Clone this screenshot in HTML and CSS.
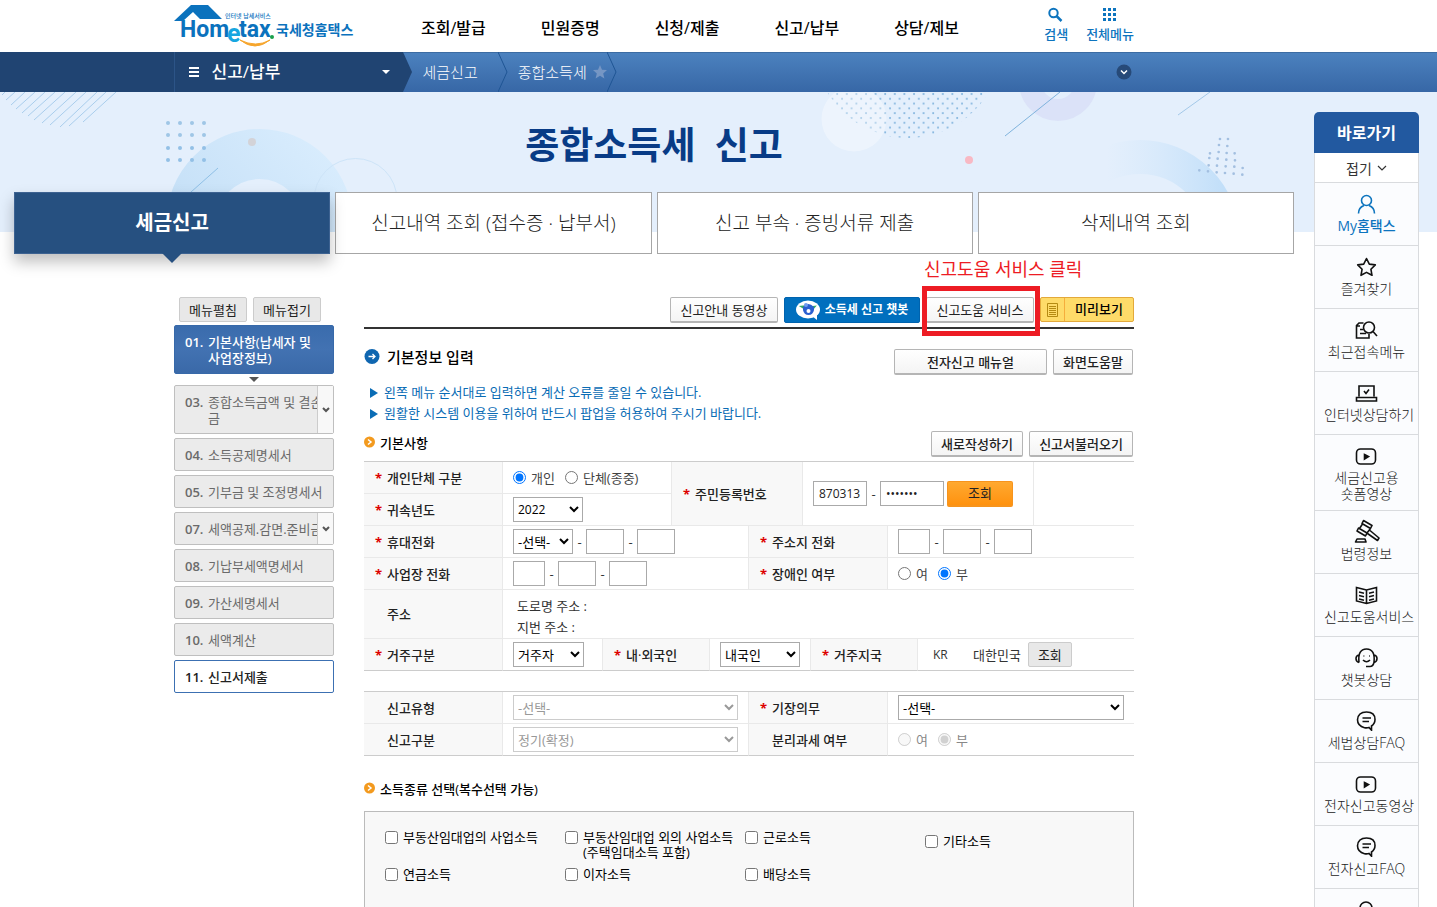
FILE: index.html
```
<!DOCTYPE html>
<html lang="ko">
<head>
<meta charset="utf-8">
<meta name="viewport" content="width=device-width, initial-scale=1">
<title>국세청홈택스 - 종합소득세 신고</title>
<link rel="stylesheet" href="styles.css">
</head>
<body>
<header class="top">
  <div class="top-inner">
    <a class="logo" href="#" aria-label="Hometax 국세청홈택스">
      <svg width="180" height="48" viewBox="0 0 180 48">
        <path d="M0 17 17 1H34L48 15H26L19 8 9 17Z" fill="#0b72bd"/>
        <text class="lg-main" x="6" y="33">Hom</text>
        <text class="lg-e" x="53" y="38">e</text>
        <text class="lg-main" x="65" y="33">tax</text>
        <circle cx="98" cy="33" r="2" fill="#1ba04b"/>
        <path d="M66 36Q81 48 96 36Q82 44 66 36Z" fill="#f6a52c" stroke="#f6a52c"/>
        <text class="lg-tiny" x="51" y="14">인터넷 납세서비스</text>
        <text class="lg-ko" x="102" y="31">국세청홈택스</text>
      </svg>
    </a>
    <nav class="gnb">
      <a href="#">조회/발급</a>
      <a href="#">민원증명</a>
      <a href="#">신청/제출</a>
      <a href="#">신고/납부</a>
      <a href="#">상담/제보</a>
    </nav>
    <div class="util">
      <a href="#"><svg width="16" height="16" viewBox="0 0 16 16" fill="none" stroke="#0d74be"><circle cx="5.500" cy="6" r="4.200" stroke-width="2"/><path d="M8.500 9 13.500 14" stroke-width="2.500"/></svg><span>검색</span></a>
      <a href="#"><svg width="16" height="16" viewBox="0 0 16 16" fill="#0d74be"><path d="M1 1h3v3H1zM6 1h3v3H6zM11 1h3v3h-3zM1 6h3v3H1zM6 6h3v3H6zM11 6h3v3h-3zM1 11h3v3H1zM6 11h3v3H6zM11 11h3v3h-3z"/></svg><span>전체메뉴</span></a>
    </div>
  </div>
</header>

<div class="crumb">
  <div class="crumb-left"></div>
  <div class="crumb-inner">
    <button class="crumb-menu" type="button">
      <svg width="10" height="10" viewBox="0 0 10 10" fill="#fff"><path d="M0 0h10v2H0zM0 4h10v2H0zM0 8h10v2H0z"/></svg>
      <span>신고/납부</span>
      <svg width="8" height="4" viewBox="0 0 8 4" fill="#fff"><path d="M0 0h8L4 4z"/></svg>
    </button>
    <svg class="crumb-tip" width="10" height="40" viewBox="0 0 10 40"><path d="M0 0 9 20 0 40Z" fill="#204472"/></svg>
    <a class="crumb-item" href="#">세금신고</a>
    <svg width="10" height="40" viewBox="0 0 10 40" fill="none"><path d="M0 0 9 20 0 40" stroke="#1f5594"/></svg>
    <a class="crumb-item" href="#">종합소득세</a>
    <svg class="crumb-star" width="14" height="14" viewBox="0 0 14 14"><path d="m7 0 2 4.700 5 .4-3.800 3.300 1.200 5L7 10.700 2.600 13.400l1.200-5L0 5.100l5-.4z" fill="#7596c4"/></svg>
    <svg width="10" height="40" viewBox="0 0 10 40" fill="none"><path d="M0 0 9 20 0 40" stroke="#1f5594"/></svg>
    <button class="crumb-more" type="button" aria-label="펼치기"><svg width="16" height="16" viewBox="0 0 16 16"><circle cx="8" cy="8" r="7.500" fill="#274a78"/><path d="m5 6.500 3 3 3-3" fill="none" stroke="#fff" stroke-width="1.500"/></svg></button>
  </div>
  <div class="crumb-right"></div>
</div>

<section class="hero">
  <svg class="hero-art" viewBox="0 0 1437 140" preserveAspectRatio="xMidYMin slice" aria-hidden="true">
    <defs>
      <linearGradient id="ringL" x1="0" y1="1" x2="1" y2="0"><stop offset="0" stop-color="#bfdcf5"/><stop offset="1" stop-color="#d8ecfd"/></linearGradient>
      <linearGradient id="ringR"><stop offset=".3" stop-color="#cfe6fb" stop-opacity="0"/><stop offset="1" stop-color="#c2dff9"/></linearGradient>
      <pattern id="dots" width="9.600" height="9.600" patternUnits="userSpaceOnUse"><circle cx="2" cy="2" r="1" fill="#7db1dc"/><circle cx="6.800" cy="6.800" r="1" fill="#7db1dc"/></pattern>
    </defs>
    <path d="M5 0 2 3M15 0 6 8M25 0 11 13M35 0 16 17M45 0 22 21M55 0 28 24M65 0 34 28M76 0 42 31M86 0 50 33M97 0 60 35M106 0 69 34M116 0 83 30" stroke="#a9cdec" fill="none"/>
    <g fill="#9fc6e6"><circle cx="168" cy="31" r="2"/><circle cx="180" cy="31" r="2"/><circle cx="192" cy="31" r="2"/><circle cx="204" cy="31" r="2"/><circle cx="168" cy="43" r="2"/><circle cx="180" cy="43" r="2"/><circle cx="192" cy="43" r="2"/><circle cx="204" cy="43" r="2"/></g>
    <circle cx="259.500" cy="130" r="68" fill="none" stroke="url(#ringL)" stroke-width="50"/>
    <g fill="#93c0e6"><circle cx="168" cy="56" r="2"/><circle cx="180" cy="56" r="2"/><circle cx="192" cy="56" r="2"/><circle cx="204" cy="56" r="2"/><circle cx="168" cy="68" r="2"/><circle cx="180" cy="68" r="2"/><circle cx="192" cy="68" r="2"/><circle cx="204" cy="68" r="2"/></g>
    <circle cx="252" cy="50" r="4" fill="#d3d3d8"/>
    <path d="M191 100 218 76" stroke="#8fc0e6"/>
    <circle cx="355.500" cy="108" r="41.500" fill="none" stroke="#cde4f8"/>
    <circle cx="908" cy="-48" r="94" fill="url(#dots)"/>
    <circle cx="854" cy="27" r="32.500" fill="#fff" opacity=".35"/>
    <circle cx="1058" cy="-10" r="28" fill="none" stroke="#dbe2f8" stroke-width="22"/>
    <path d="M1060 0 1005 44" stroke="#7fb3dc"/>
    <path d="M1210 0 1178 23" stroke="#a3c8e8"/>
    <circle cx="969" cy="68" r="4" fill="#f8b9c4"/>
    <circle cx="1140" cy="148" r="83" fill="none" stroke="url(#ringR)" stroke-width="34"/>
    <path transform="translate(900 -2) scale(.3333)" d="M960 147h.1M984 147h.1M957 165h.1M982 168h.1M930 190h.1M956 186h.1M980 189h.1M1004 190h.1M928 204h.1M953 206h.1M979 209h.1M1005 211h.1M926 226h.1M951 227h.1M977 229h.1M1003 230h.1M1028 234h.1M898 241h.1M924 244h.1M950 247h.1M975 249h.1M1001 251h.1M1027 254h.1" stroke="#a3bfe0" stroke-width="8" stroke-linecap="round"/>
  </svg>
  <h1 class="hero-title">종합소득세 &nbsp;신고</h1>
  <nav class="tabs">
    <a class="tab tab-on" href="#">세금신고</a>
    <a class="tab" href="#">신고내역 조회 (접수증 · 납부서)</a>
    <a class="tab" href="#">신고 부속 · 증빙서류 제출</a>
    <a class="tab" href="#">삭제내역 조회</a>
  </nav>
</section>

<div class="page">
  <aside class="side">
    <div class="side-ctl">
      <button class="btn btn-gray" type="button">메뉴펼침</button>
      <button class="btn btn-gray" type="button">메뉴접기</button>
    </div>
    <ul class="steps">
      <li class="step step-now"><a href="#"><b>01.</b><span>기본사항(납세자 및 사업장정보)</span></a></li>
      <li class="step-arrow"></li>
      <li class="step"><a href="#"><b>03.</b><span class="cut">종합소득금액 및 결손금</span></a><button class="step-more" type="button" aria-label="하위메뉴"><svg width="8" height="6" viewBox="0 0 8 6"><path d="m1 1 3 3 3-3" fill="none" stroke="#555" stroke-width="2"/></svg></button></li>
      <li class="step"><a href="#"><b>04.</b><span>소득공제명세서</span></a></li>
      <li class="step"><a href="#"><b>05.</b><span>기부금 및 조정명세서</span></a></li>
      <li class="step"><a href="#"><b>07.</b><span>세액공제.감면.준비금</span></a><button class="step-more" type="button" aria-label="하위메뉴"><svg width="8" height="6" viewBox="0 0 8 6"><path d="m1 1 3 3 3-3" fill="none" stroke="#555" stroke-width="2"/></svg></button></li>
      <li class="step"><a href="#"><b>08.</b><span>기납부세액명세서</span></a></li>
      <li class="step"><a href="#"><b>09.</b><span>가산세명세서</span></a></li>
      <li class="step"><a href="#"><b>10.</b><span>세액계산</span></a></li>
      <li class="step step-last"><a href="#"><b>11.</b><span>신고서제출</span></a></li>
    </ul>
  </aside>

  <main class="main">
    <div class="tools">
      <button class="btn w-108" type="button">신고안내 동영상</button>
      <button class="btn btn-bot" type="button"><svg width="24" height="20" viewBox="0 0 24 20"><ellipse cx="12" cy="9.500" rx="12" ry="9" fill="#fff"/><path d="m16 16 5 4v-7z" fill="#fff"/><path d="M5 6.500 9 6 9 9ZM19 6.500 15 7 16 10Z" fill="#35a866" stroke="#35a866" stroke-width="1.500"/><path d="M7 7q5-6 11 0v3q-1 5-5.500 5T7 10z" fill="#2a5fd0"/><circle cx="12.500" cy="11" r="2" fill="#fff"/><circle cx="10" cy="5" r="2" fill="#6f9bee"/></svg><span>소득세 신고 챗봇</span></button>
      <div class="mark">
        <span class="mark-note">신고도움 서비스 클릭</span>
        <button class="btn w-108" type="button">신고도움 서비스</button>
      </div>
      <button class="btn btn-view" type="button"><span class="view-ico"><svg width="12" height="14" viewBox="0 0 12 14" fill="none" stroke="#b48a12"><path d="M.5.5h10v13H.5zM2 3.500h7M2 5.500h7M2 7.500h7M2 9.500h7M2 11.500h7"/></svg></span><span class="view-txt">미리보기</span></button>
    </div>

    <div class="row-head">
      <h2 class="h-main"><svg width="16" height="16" viewBox="0 0 16 16"><circle cx="8" cy="7.500" r="7.500" fill="#0f66b0"/><path d="M4.500 7.500h6M8.500 5 11 7.500 8.500 10" fill="none" stroke="#fff" stroke-width="1.300"/></svg>기본정보 입력</h2>
      <div class="btns">
        <button class="btn w-153" type="button">전자신고 매뉴얼</button>
        <button class="btn w-80" type="button">화면도움말</button>
      </div>
    </div>
    <ul class="info">
      <li>왼쪽 메뉴 순서대로 입력하면 계산 오류를 줄일 수 있습니다.</li>
      <li>원활한 시스템 이용을 위하여 반드시 팝업을 허용하여 주시기 바랍니다.</li>
    </ul>

    <div class="row-head row-sub">
      <h3 class="h-sub"><svg width="11" height="12" viewBox="0 0 11 12"><circle cx="5.500" cy="6" r="5.500" fill="#f39a1e"/><path d="m4 3.500 3 2.500-3 2.500" fill="none" stroke="#fff" stroke-width="1.500"/></svg>기본사항</h3>
      <div class="btns">
        <button class="btn w-92" type="button">새로작성하기</button>
        <button class="btn w-104" type="button">신고서불러오기</button>
      </div>
    </div>

    <table class="form">
      <colgroup><col class="c139"><col class="c100"><col class="c69"><col class="c38"><col class="c39"><col class="c54"><col class="c8"><col class="c77"><col class="c30"><col class="c116"><col class="c100"></colgroup>
      <tr>
        <th class="req">개인단체 구분</th>
        <td colspan="2"><div class="f"><label class="opt"><input type="radio" name="kind" checked>개인</label><label class="opt"><input type="radio" name="kind">단체(종중)</label></div></td>
        <th class="req" rowspan="2" colspan="3"><label for="rrn">주민등록번호</label></th>
        <td rowspan="2" colspan="4"><div class="f"><input class="txt i54" id="rrn" type="text" value="870313"><i>-</i><input class="txt i64" type="password" value="1234567" aria-label="주민등록번호 뒷자리"><button class="btn btn-org" type="button">조회</button></div></td>
        <td rowspan="2"></td>
      </tr>
      <tr>
        <th class="req"><label for="year">귀속년도</label></th>
        <td colspan="2"><select class="sel s70 num" id="year"><option>2022</option></select></td>
      </tr>
      <tr>
        <th class="req"><label for="hp">휴대전화</label></th>
        <td colspan="4"><div class="f"><select class="sel s60" id="hp"><option>-선택-</option></select><i>-</i><input class="txt i38" type="text" aria-label="휴대전화 국번"><i>-</i><input class="txt i38" type="text" aria-label="휴대전화 번호"></div></td>
        <th class="req" colspan="3"><label for="home">주소지 전화</label></th>
        <td colspan="3" class="end"><div class="f"><input class="txt i32" id="home" type="text"><i>-</i><input class="txt i38" type="text" aria-label="주소지 국번"><i>-</i><input class="txt i38" type="text" aria-label="주소지 번호"></div></td>
      </tr>
      <tr>
        <th class="req"><label for="work">사업장 전화</label></th>
        <td colspan="4"><div class="f"><input class="txt i32" id="work" type="text"><i>-</i><input class="txt i38" type="text" aria-label="사업장 국번"><i>-</i><input class="txt i38" type="text" aria-label="사업장 번호"></div></td>
        <th class="req" colspan="3">장애인 여부</th>
        <td colspan="3" class="end"><div class="f"><label class="opt"><input type="radio" name="dis">여</label><label class="opt"><input type="radio" name="dis" checked>부</label></div></td>
      </tr>
      <tr>
        <th>주소</th>
        <td colspan="10" class="end addr"><p>도로명 주소 :</p><p>지번 주소 :</p></td>
      </tr>
      <tr class="last">
        <th class="req"><label for="live">거주구분</label></th>
        <td><select class="sel s71" id="live"><option>거주자</option></select></td>
        <th class="req" colspan="2"><label for="nat">내·외국인</label></th>
        <td colspan="3"><select class="sel s80" id="nat"><option>내국인</option></select></td>
        <th class="req" colspan="2">거주지국</th>
        <td colspan="2" class="end"><div class="f nation"><span class="code">KR</span><span>대한민국</span><button class="btn btn-gray w-44" type="button">조회</button></div></td>
      </tr>
    </table>

    <table class="form form-2">
      <colgroup><col class="c139"><col class="c246"><col class="c139"><col class="c246"></colgroup>
      <tr>
        <th><label for="rtype">신고유형</label></th>
        <td><select class="sel sfull" id="rtype" disabled><option>-선택-</option></select></td>
        <th class="req"><label for="book">기장의무</label></th>
        <td class="end"><select class="sel sfull" id="book"><option>-선택-</option></select></td>
      </tr>
      <tr class="last">
        <th><label for="rdiv">신고구분</label></th>
        <td><select class="sel sfull" id="rdiv" disabled><option>정기(확정)</option></select></td>
        <th>분리과세 여부</th>
        <td class="end"><div class="f off"><label class="opt"><input type="radio" name="sep" disabled>여</label><label class="opt"><input type="radio" name="sep" checked disabled>부</label></div></td>
      </tr>
    </table>

    <h3 class="h-sub h-income"><svg width="11" height="12" viewBox="0 0 11 12"><circle cx="5.500" cy="6" r="5.500" fill="#f39a1e"/><path d="m4 3.500 3 2.500-3 2.500" fill="none" stroke="#fff" stroke-width="1.500"/></svg>소득종류 선택(복수선택 가능)</h3>
    <div class="income">
      <label class="chk"><input type="checkbox"><span>부동산임대업의 사업소득</span></label>
      <label class="chk"><input type="checkbox"><span>부동산임대업 외의 사업소득<br>(주택임대소득 포함)</span></label>
      <label class="chk"><input type="checkbox"><span>근로소득</span></label>
      <label class="chk chk-other"><input type="checkbox"><span>기타소득</span></label>
      <label class="chk"><input type="checkbox"><span>연금소득</span></label>
      <label class="chk"><input type="checkbox"><span>이자소득</span></label>
      <label class="chk"><input type="checkbox"><span>배당소득</span></label>
    </div>
  </main>
</div>

<nav class="quick">
  <h2 class="quick-head">바로가기</h2>
  <button class="quick-fold" type="button">접기<svg width="10" height="6" viewBox="0 0 10 6"><path d="m1 1 4 4 4-4" fill="none" stroke="#333" stroke-width="1.200"/></svg></button>
  <a class="q q-my" href="#"><svg viewBox="0 0 24 20"><circle cx="11.500" cy="6.500" r="5"/><path d="M3.500 19.500q0-6 5.500-8M19.500 19.500q0-6-5.500-8"/></svg>My홈택스</a>
  <a class="q" href="#"><svg viewBox="0 0 24 20"><path d="m11.500 1.500 2.800 5.600 6 .8-4.400 4.300 1.100 6.100L11.500 15.400 6 18.300l1.100-6.100L2.700 7.900l6-.8z" stroke-linejoin="round"/></svg>즐겨찾기</a>
  <a class="q" href="#"><svg viewBox="0 0 24 20"><path d="M8.500 3H4L1.500 5.500V18H14v-4M1.500 6H5M5 9.500h3M5 13.500h6"/><circle cx="14" cy="7.500" r="5.500"/><path d="m18 11.500 4 4.500"/></svg>최근접속메뉴</a>
  <a class="q" href="#"><svg viewBox="0 0 24 20"><path d="M4 13.500V3h15v10.500M1.500 14.500h20V18h-20zM9 8l2 2.500 3-4"/></svg>인터넷상담하기</a>
  <a class="q" href="#"><svg viewBox="0 0 24 20"><rect x="1.500" y="3" width="19" height="15" rx="4"/><path d="m9.500 8.500 4 2-4 2.500z" fill="#111"/></svg>세금신고용<br>숏폼영상</a>
  <a class="q" href="#"><svg class="big" viewBox="0 0 26 24"><path d="m9.500 1.500 8.500 5-1.500 3-8.500-5zM4.500 9l8.500 5-1.500 3L3 12zM8.500 5 5.500 9.500M16.500 9.500 13 14M16 11.500l9 7.500-1.500 2.500-10-7M3 20h8l1 3H1.500z" stroke-linejoin="round"/></svg>법령정보</a>
  <a class="q" href="#"><svg viewBox="0 0 24 20"><path d="M11.500 5 1.500 2.500v13.500l10 2.500 10-2.500V2.500zM11.500 5v13.500M4 7l5 1.200M4 10.500l5 1.200M4 14l5 1.200M19 7l-5 1.200M19 10.500l-5 1.200M19 14l-5 1.200"/></svg>신고도움서비스</a>
  <a class="q" href="#"><svg viewBox="0 0 24 20"><path d="M4 14.500Q2.500 1 11.500 1T19 14.500q-1 4-4 4h-4M4 7Q1 7.500 1 10.500t3 4M19 7q3 .5 3 3.500t-3 4M8 12q3.500 3.500 7 0M8.500 8h.8M14 8h.8"/></svg>챗봇상담</a>
  <a class="q" href="#"><svg viewBox="0 0 24 20"><path d="M14 16.500q-2 .6-4.500.2Q2.500 15 2.500 8.800 3 1 11.500 1t8.500 7.500q0 4-3.500 6.500v4.200zM7.500 7h8.500M7.500 10.500H14"/></svg>세법상담FAQ</a>
  <a class="q" href="#"><svg viewBox="0 0 24 20"><rect x="1.500" y="3" width="19" height="15" rx="4"/><path d="m9.500 8.500 4 2-4 2.500z" fill="#111"/></svg>전자신고동영상</a>
  <a class="q" href="#"><svg viewBox="0 0 24 20"><path d="M14 16.500q-2 .6-4.500.2Q2.500 15 2.500 8.800 3 1 11.500 1t8.500 7.500q0 4-3.500 6.500v4.200zM7.500 7h8.500M7.500 10.500H14"/></svg>전자신고FAQ</a>
  <a class="q" href="#" aria-label="도움말"><svg viewBox="0 0 24 20"><circle cx="11" cy="8" r="6"/></svg></a>
</nav>
</body>
</html>
```

FILE: styles.css
```
* { box-sizing: border-box; }
html { overflow-x: hidden; }
body, button, input, select {
  font-family: "Open Sans", "Noto Sans CJK KR", sans-serif;
  font-size: 13px;
}
body { margin: 0; position: relative; height: 100vh; overflow-y: auto; color: #333; background: #fff; line-height: 16px; scrollbar-width: none; }
h1, h2, h3, p, ul { margin: 0; padding: 0; }
ul { list-style: none; }
a { color: inherit; text-decoration: none; }
button { cursor: pointer; margin: 0; }
svg { display: block; flex: none; }

/* header */
.top, .hero, .page, .crumb { padding-right: 129px; }
.top-inner { display: flex; max-width: 960px; height: 52px; margin: 0 auto; }
.logo { margin-top: 4px; width: 180px; flex: none; }
.lg-main { font: 700 23px Roboto, sans-serif; fill: #0b72bd; }
.lg-e { font: 700 25px Roboto, sans-serif; fill: #17a6e0; }
.lg-tiny { font: 500 6px "Noto Sans CJK KR", sans-serif; fill: #0b72bd; }
.lg-ko { font: 700 14px "Noto Sans CJK KR", sans-serif; fill: #0b72bd; }
.gnb { display: flex; flex: 1; gap: 55px; margin-left: 67px; padding-top: 16px; font-size: 16px; line-height: 24px; font-weight: 500; color: #000; white-space: nowrap; }
.util { display: flex; gap: 18px; padding-top: 7px; color: #0d74be; font-weight: 500; }
.util a { display: flex; flex-direction: column; align-items: center; gap: 3px; white-space: nowrap; }

/* breadcrumb bar */
.crumb { display: flex; height: 40px; background: linear-gradient(#4c82bf, #3767a6); box-shadow: inset 0 1px #3c6ca3; color: #fff; }
.crumb-left { flex: 1; background: #204472; border-right: 1px solid #2c5487; }
.crumb-right { flex: 1; }
.crumb-inner { display: flex; flex: 0 1 960px; align-items: center; }
.crumb-menu { display: flex; align-items: center; width: 228px; height: 40px; padding: 0 13px 0 14px; border: 0; background: #204472; color: #fff; font-size: 17px; font-weight: 500; }
.crumb-menu span { flex: 1; margin-left: 13px; text-align: left; line-height: 24px; }
.crumb-item { padding: 0 20px 0 10px; font-size: 15px; font-weight: 300; line-height: 24px; white-space: nowrap; }
.crumb-star { margin-left: -14px; }
.crumb-more { margin-left: auto; margin-right: 3px; padding: 0; border: 0; background: none; }

/* banner and tabs */
.hero { position: relative; }
.hero-art { position: absolute; left: 0; top: 0; width: 100%; height: 140px; background: #e4effc; }
.hero-title { position: relative; height: 100px; padding-top: 2px; line-height: 102px; text-align: center; font-size: 37px; font-weight: 700; color: #083b86; }
.tabs { position: relative; display: grid; grid-template-columns: repeat(4, 1fr); gap: 5px; max-width: 1280px; margin: 0 auto; }
.tab { display: flex; align-items: center; justify-content: center; height: 62px; border: 1px solid #a6a6a6; background: #fff; font-size: 19px; font-weight: 300; color: #222; }
.tab-on { position: relative; background: #265080; border-color: #3d6291; color: #fff; font-size: 20px; font-weight: 700; box-shadow: 0 8px 14px rgba(0, 0, 0, .25); }
.tab-on::after { content: ""; position: absolute; left: 50%; top: 100%; margin-left: -10px; border: 10px solid transparent; border-top-color: #265080; border-bottom: 0; }

/* page body */
.page { padding-top: 43px; display: grid; grid-template-columns: 160px minmax(0, 770px); column-gap: 30px; justify-content: center; }
.btn { height: 26px; padding: 0; border: 1px solid #b5b5b5; border-bottom-width: 2px; border-radius: 2px; background: linear-gradient(#fff, #f4f4f4); color: #222; font-weight: 400; line-height: 20px; white-space: nowrap; }
.btn-gray { height: 25px; border: 1px solid #ccc; background: #e8e8e8; }
.btns .btn { font-weight: 500; }
.w-44 { width: 44px; } .w-80 { width: 80px; } .w-92 { width: 92px; } .w-104 { width: 104px; } .w-108 { width: 108px; } .w-153 { width: 153px; }

.side-ctl { display: flex; gap: 6px; padding-left: 5px; margin-bottom: 3px; }
.side-ctl .btn { width: 68px; }
.steps { display: grid; row-gap: 4px; }
.step { position: relative; border: 1px solid #bfbfbf; border-radius: 2px; background: #ebebeb; color: #6a6a6a; }
.step a { display: flex; padding: 8px 4px 7px 10px; }
.step b { flex: 0 0 23px; font-weight: 600; }
.step .cut { word-break: break-all; }
.step-now { background: linear-gradient(#3a6cad, #4272b2 50%, #3a69a8); border-color: #3769a9; color: #fff; font-weight: 500; }
.step-now span { word-break: keep-all; }
.step-arrow { width: 0; margin: -1px auto -1px; border: 5px solid transparent; border-top-color: #555; border-bottom: 0; }
.step-more { position: absolute; right: 0; top: 0; bottom: 0; width: 16px; display: flex; align-items: center; justify-content: center; padding: 0; border: 0; border-left: 1px solid #ccc; background: #f8f8f8; }
.step-last { background: #fff; border-color: #3c70b2; color: #222; font-weight: 500; }

.tools { display: flex; justify-content: flex-end; gap: 6px; padding-bottom: 4px; border-bottom: 2px solid #333; }
.btn-bot { display: flex; align-items: center; justify-content: center; gap: 5px; width: 136px; border: 1px solid #0063ae; background: #006fbe; color: #fff; font-size: 12px; font-weight: 700; }
.mark { position: relative; }
.mark::after { content: ""; position: absolute; inset: -11px -6px -13px -4px; border: 5px solid #ed1c24; pointer-events: none; }
.mark-note { position: absolute; left: -2px; bottom: 42px; font-size: 18px; line-height: 24px; font-weight: 400; color: #ed1c24; white-space: nowrap; }
.btn-view { display: flex; width: 94px; height: 25px; border: 1px solid #e3a93a; background: #fedb69; color: #000; font-weight: 500; }
.view-ico { display: flex; align-items: center; justify-content: center; width: 24px; height: 23px; border-right: 1px solid #f5ad3c; }
.view-txt { flex: 1; line-height: 23px; }

.row-head { display: flex; justify-content: space-between; align-items: flex-start; margin-top: 20px; }
.btns { display: flex; gap: 6px; padding-right: 1px; }
.h-main { display: flex; gap: 7px; font-size: 15px; font-weight: 500; line-height: 16px; color: #000; }
.info { margin-top: 7px; color: #0a6cb5; line-height: 21px; }
.info li { display: flex; align-items: center; padding-left: 6px; }
.info li::before { content: ""; margin-right: 6px; border: 5px solid transparent; border-left: 8px solid #0a6cb5; border-right: 0; }
.row-sub { margin-top: 7px; }
.h-sub { display: flex; gap: 5px; font-size: 13px; font-weight: 500; line-height: 24px; color: #000; }
.h-sub svg { margin-top: 5px; }

/* form tables */
.form { width: 100%; margin-top: 4px; table-layout: fixed; border-collapse: separate; border-spacing: 0; border-top: 1px solid #ccc; }
.form-2 { margin-top: 20px; }
.c8 { width: 8px; } .c30 { width: 30px; } .c38 { width: 38px; } .c39 { width: 39px; } .c54 { width: 54px; } .c69 { width: 69px; } .c77 { width: 77px; } .c100 { width: 100px; } .c116 { width: 116px; } .c139 { width: 139px; } .c246 { width: 246px; }
.form th, .form td { height: 32px; padding: 0 0 0 10px; text-align: left; vertical-align: middle; border-bottom: 1px solid #e9e9e9; border-right: 1px solid #e9e9e9; }
.form th { padding-left: 23px; background: #f8f8f8; font-weight: 500; color: #222; white-space: nowrap; }
.form .req { padding-left: 11px; }
.req::before { content: "*"; display: inline-block; width: 12px; color: #d00; font-weight: 700; line-height: 8px; vertical-align: 0; }
.form .end { border-right: 0; }
.form td[rowspan="2"]:last-child { border-right: 0; }
.form .last th, .form .last td { border-bottom-color: #ccc; }
.form .addr { height: 49px; padding: 5px 0 0 14px; line-height: 21px; }
.f { display: flex; align-items: center; }
.f i { width: 13px; text-align: center; font-style: normal; }
.txt { height: 25px; padding: 0 5px; border: 1px solid #aaa; font-size: 12px; color: #222; }
.i32 { width: 32px; } .i38 { width: 38px; } .i54 { width: 54px; } .i64 { width: 64px; }
.sel { display: block; height: 25px; padding: 0; border: 1px solid #aaa; border-radius: 0; background: #fff; color: #000; }
.num { font-size: 12px; }
.s60 { width: 60px; } .s70 { width: 70px; } .s71 { width: 71px; } .s80 { width: 80px; } .sfull { width: calc(100% - 10px); }
.sel:disabled { color: #999; border-color: #ccc; opacity: 1; }
.opt { display: flex; align-items: center; gap: 5px; margin-right: 10px; color: #444; }
.opt input { margin: 0; width: 13px; height: 13px; }
.off .opt { color: #888; }
.btn-org { width: 66px; margin-left: 3px; border: 1px solid #f7941d; border-bottom-width: 2px; background: linear-gradient(#ffa930, #ff920f); }
.nation { gap: 7px; }
.code { width: 38px; padding-left: 5px; font-size: 12px; }

/* income kinds */
.h-income { margin-top: 21px; }
.income { display: grid; grid-template-columns: repeat(4, 1fr); row-gap: 7px; min-height: 160px; margin-top: 10px; padding: 18px 28px 18px 20px; align-content: start; border: 1px solid #bbb; background: #f8f8f8; color: #000; line-height: 15px; }
.chk { display: flex; gap: 5px; white-space: nowrap; }
.chk input { width: 13px; height: 13px; margin: 1px 0 0; flex: none; }
.chk-other { padding-top: 4px; }

/* floating quick menu */
.quick { position: absolute; top: 112px; right: 18px; width: 105px; font-size: 14px; line-height: 16px; color: #222; text-align: center; }
.quick-head { height: 41px; border-radius: 5px 5px 0 0; background: #2259a0; color: #fff; font-size: 16px; font-weight: 700; line-height: 42px; }
.quick-fold { display: flex; width: 100%; height: 30px; align-items: center; justify-content: center; gap: 5px; border: 1px solid #d9dbde; border-top: 0; background: #fff; font-size: 14px; color: #333; }
.q { display: block; min-height: 63px; padding: 11px 9px 8px; border: 1px solid #d9dbde; border-top: 0; background: #fbfcfe; font-weight: 300; white-space: nowrap; }
.q svg { width: 24px; height: 20px; margin: 0 auto 4px; fill: none; stroke: #111; stroke-width: 1.600px; }
.q svg.big { width: 26px; height: 24px; margin: -3px auto 3px; }
.q-my { color: #0d74be; font-weight: 500; }
.q-my svg { stroke: #0d74be; }
```
